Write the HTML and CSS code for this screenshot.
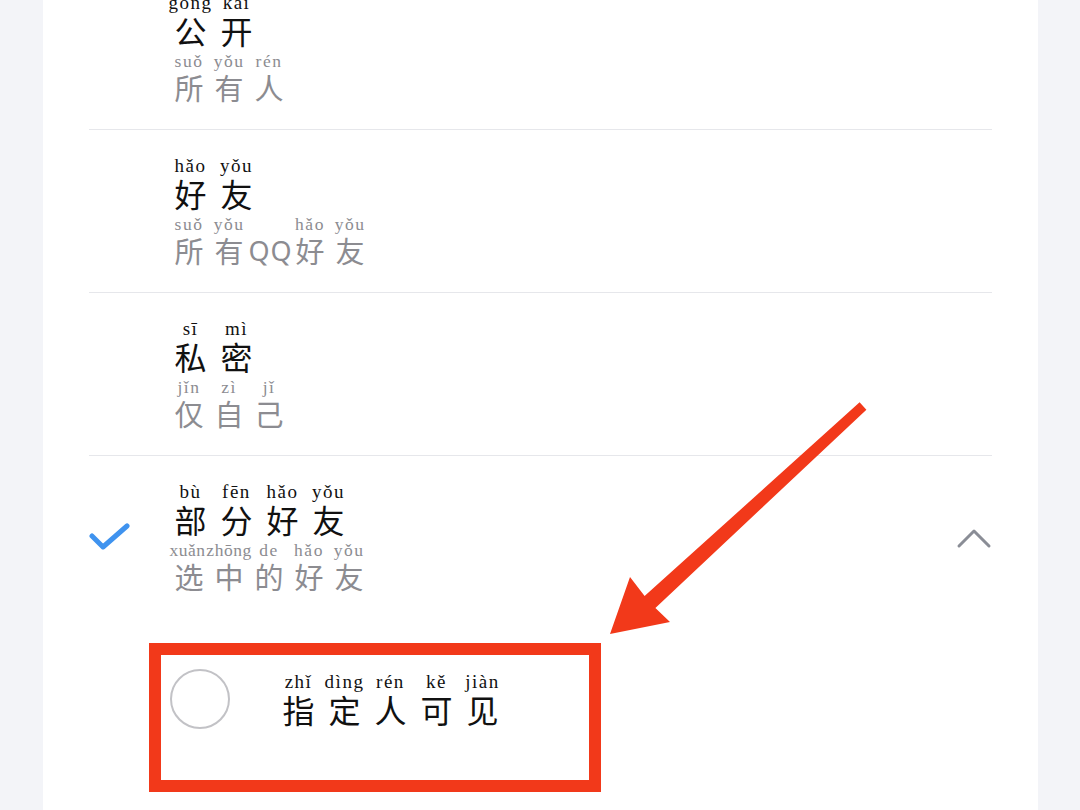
FILE: index.html
```html
<!DOCTYPE html>
<html lang="zh">
<head>
<meta charset="utf-8">
<link rel="stylesheet" href="styles.css">
</head>
<body>
<div class="page">
  <div class="card">
    <div class="row">
      <div class="mark"></div>
      <div class="text">
        <div class="line main">
          <span class="col"><i>gōng</i><b>公</b></span>
          <span class="col"><i>kāi</i><b>开</b></span>
        </div>
        <div class="line sub">
          <span class="col"><i>suǒ</i><b>所</b></span>
          <span class="col"><i>yǒu</i><b>有</b></span>
          <span class="col"><i>rén</i><b>人</b></span>
        </div>
      </div>
    </div>
    <div class="row">
      <div class="mark"></div>
      <div class="text">
        <div class="line main">
          <span class="col"><i>hǎo</i><b>好</b></span>
          <span class="col"><i>yǒu</i><b>友</b></span>
        </div>
        <div class="line sub">
          <span class="col"><i>suǒ</i><b>所</b></span>
          <span class="col"><i>yǒu</i><b>有</b></span>
          <span class="col qq"><i>&nbsp;</i><b>QQ</b></span>
          <span class="col"><i>hǎo</i><b>好</b></span>
          <span class="col"><i>yǒu</i><b>友</b></span>
        </div>
      </div>
    </div>
    <div class="row">
      <div class="mark"></div>
      <div class="text">
        <div class="line main">
          <span class="col"><i>sī</i><b>私</b></span>
          <span class="col"><i>mì</i><b>密</b></span>
        </div>
        <div class="line sub">
          <span class="col"><i>jǐn</i><b>仅</b></span>
          <span class="col"><i>zì</i><b>自</b></span>
          <span class="col"><i>jǐ</i><b>己</b></span>
        </div>
      </div>
    </div>
    <div class="row last">
      <div class="mark">
        <svg class="check" viewBox="0 0 42 30" width="42" height="30"><polyline points="3,13 14,24 38,3" fill="none" stroke="#3f93ef" stroke-width="5" stroke-linecap="round" stroke-linejoin="round"/></svg>
      </div>
      <div class="text">
        <div class="line main">
          <span class="col"><i>bù</i><b>部</b></span>
          <span class="col"><i>fēn</i><b>分</b></span>
          <span class="col"><i>hǎo</i><b>好</b></span>
          <span class="col"><i>yǒu</i><b>友</b></span>
        </div>
        <div class="line sub">
          <span class="col push-r"><i>xuǎn</i><b>选</b></span>
          <span class="col push-l"><i>zhōng</i><b>中</b></span>
          <span class="col"><i>de</i><b>的</b></span>
          <span class="col"><i>hǎo</i><b>好</b></span>
          <span class="col"><i>yǒu</i><b>友</b></span>
        </div>
      </div>
      <svg class="chevron" viewBox="0 0 36 22" width="36" height="22"><polyline points="3,19 18,4 33,19" fill="none" stroke="#8a8d96" stroke-width="3" stroke-linecap="round" stroke-linejoin="round"/></svg>
    </div>
    <div class="option">
      <span class="radio"></span>
      <div class="line main">
        <span class="col"><i>zhǐ</i><b>指</b></span>
        <span class="col"><i>dìng</i><b>定</b></span>
        <span class="col"><i>rén</i><b>人</b></span>
        <span class="col"><i>kě</i><b>可</b></span>
        <span class="col"><i>jiàn</i><b>见</b></span>
      </div>
    </div>
  </div>
  <div class="highlight"></div>
  <svg class="arrow" viewBox="0 0 1080 810" width="1080" height="810"><polygon points="859.6,402.3 866.4,409.7 655.4,607.9 670,622 610,634 630,577 644.6,596.1" fill="#f2391a"/></svg>
</div>
</body>
</html>
```

FILE: styles.css
```css
html, body {
  margin: 0;
  padding: 0;
}
body {
  background: #f3f4f8;
  width: 1080px;
  height: 810px;
  overflow: hidden;
  font-family: "Liberation Serif", serif;
}
.page {
  position: relative;
  width: 1080px;
  height: 810px;
  overflow: hidden;
  padding-left: 43px;
  box-sizing: border-box;
}
.card {
  width: 995px;
  height: 860px;
  margin-top: -33px;
  background: #fff;
  padding: 0 46px;
  box-sizing: border-box;
}
.row {
  display: flex;
  align-items: center;
  height: 163px;
  border-bottom: 1.5px solid #e6e7eb;
  box-sizing: border-box;
}
.row.last {
  border-bottom: none;
}
.mark {
  width: 86px;
  flex: none;
  display: flex;
  align-items: center;
}
.check {
  display: block;
}
.text {
  flex: 1;
  display: flex;
  flex-direction: column;
}
.chevron {
  display: block;
}
.line {
  display: flex;
  gap: 15px;
}
.col {
  display: flex;
  flex-direction: column;
  align-items: center;
  width: 31px;
  flex: none;
}
.col i {
  font-style: normal;
  white-space: nowrap;
  font-family: "Liberation Serif", serif;
}
.col b {
  font-weight: 400;
  font-family: "Noto Sans CJK SC", sans-serif;
}
.main .col i {
  font-size: 19px;
  line-height: 19px;
  letter-spacing: 1.5px;
  color: #111;
}
.main .col b {
  font-size: 32px;
  line-height: 36px;
  color: #111;
}
.sub {
  margin-top: 4px;
  gap: 12px;
}
.sub .col {
  width: 28px;
}
.sub .col i {
  font-size: 17.5px;
  line-height: 19px;
  letter-spacing: 1.5px;
  color: #8c8c91;
}
.sub .col b {
  font-size: 29px;
  line-height: 33px;
  color: #8c8c91;
}
.sub .col.push-r i {
  letter-spacing: 0.5px;
  margin-right: 3px;
}
.sub .col.push-l i {
  letter-spacing: 0.5px;
}
.sub .col.qq {
  width: 47px;
  margin: 0 -10px 0 -8px;
}
.sub .col.qq b {
  font-family: "Noto Sans", sans-serif;
  font-size: 27px;
  letter-spacing: 1px;
}
.option {
  display: flex;
  align-items: center;
  height: 160px;
  padding-left: 81px;
  box-sizing: border-box;
}
.radio {
  width: 60px;
  height: 60px;
  border: 2px solid #c2c2c6;
  border-radius: 50%;
  box-sizing: border-box;
  flex: none;
  margin-right: 53px;
}
.highlight {
  position: absolute;
  left: 149px;
  top: 643px;
  width: 452px;
  height: 149px;
  border: 12px solid #f2391a;
  box-sizing: border-box;
}
.arrow {
  position: absolute;
  left: 0;
  top: 0;
}
```
